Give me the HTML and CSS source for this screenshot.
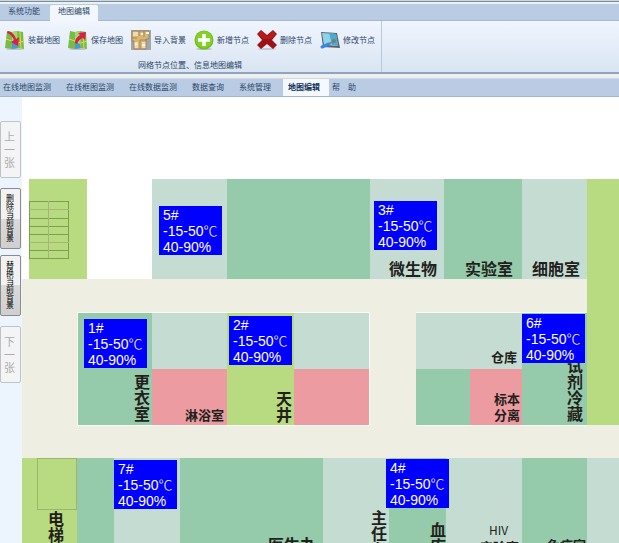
FILE: index.html
```html
<!DOCTYPE html>
<html lang="zh-CN">
<head>
    <meta charset="UTF-8">
    <meta name="viewport" content="width=device-width, initial-scale=1.0">
    <title>地图编辑</title>
    <link rel="stylesheet" href="styles.css">
</head>
<body>
    <header class="ribbon">
        <div class="ribbon-tabs">
            <button type="button" class="ribbon-tab">系统功能</button>
            <button type="button" class="ribbon-tab active">地图编辑</button>
        </div>
        <div class="ribbon-body">
            <div class="ribbon-group">
                <div class="tools">
                    <button type="button" class="tool">
                        <svg class="icon" viewBox="0 0 20 20">
                            <ellipse cx="10" cy="19" rx="9" ry="1" fill="#b9c4cc"/>
                            <path d="M2 1l5 1 5-1 6 1 1 17-6-1-6 1-7-1z" fill="#76bd45"/>
                            <path d="M7 2l5-1 1 17-6 1z" fill="#a4d867"/>
                            <path d="M7 11l5 2 1 5-6 1z" fill="#4e97d3"/>
                            <path d="M1 9l6 2M13 13l6-2M15 2l1 17" stroke="#f0cf4b" fill="none"/>
                            <path d="M3 1c4 1 7 4 8 8l3-2-1 9-7-4 3-2C8 7 5 4 2 3z" fill="#d91f4c"/>
                        </svg>
                        <span>装载地图</span>
                    </button>
                    <button type="button" class="tool">
                        <svg class="icon" viewBox="0 0 20 20">
                            <ellipse cx="10" cy="19" rx="9" ry="1" fill="#b9c4cc"/>
                            <path d="M2 1l5 1 5-1 6 1 1 17-6-1-6 1-7-1z" fill="#76bd45"/>
                            <path d="M7 2l5-1 1 17-6 1z" fill="#a4d867"/>
                            <path d="M7 12l5 2 1 4-6 1z" fill="#4e97d3"/>
                            <path d="M1 9l6 2M13 13l6-2M15 2l1 17" stroke="#f0cf4b" fill="none"/>
                            <path d="M7 13c0-4 2-6 5-8l-2-2 8-1-1 8-2-2c-3 1-5 3-6 6z" fill="#d91f4c"/>
                        </svg>
                        <span>保存地图</span>
                    </button>
                    <button type="button" class="tool">
                        <svg class="icon" viewBox="0 0 20 20">
                            <rect width="20" height="20" fill="#a5a6ac"/>
                            <path d="M1 1h17v8h-3v10H3v-8H1z" fill="#d9b673"/>
                            <path d="M2 2h5v4H2zM3 12h4v6H3zM11 12h4v6h-4z" fill="#efdcae"/>
                            <path d="M1 1h17v8h-3v10H3v-8H1zM8 1v5M1 8h5M9 10h6M9 10v9M13 1v6" stroke="#927554" stroke-width=".7" fill="none"/>
                            <path d="M15 3h3M10 4h2M4 14h2M11 15h3" stroke="#fff6dc" stroke-width="2"/>
                        </svg>
                        <span>导入背景</span>
                    </button>
                    <button type="button" class="tool">
                        <svg class="icon" viewBox="0 0 20 20">
                            <ellipse cx="10" cy="19" rx="8" ry="1" fill="#b8c2c6"/>
                            <circle cx="10" cy="10" r="9.500" fill="#6fbc1b"/>
                            <circle cx="10" cy="9.500" r="8.500" fill="#85cf27"/>
                            <path d="M10 4v12M4 10h12" stroke="#fff" stroke-width="3.500"/>
                        </svg>
                        <span>新增节点</span>
                    </button>
                    <button type="button" class="tool">
                        <svg class="icon" viewBox="0 0 20 20">
                            <ellipse cx="10" cy="19" rx="9" ry="1" fill="#c3cad1"/>
                            <path d="M4 0l6 5 6-5 4 4-5 6 5 5-4 4-6-5-6 5-4-4 5-5-5-6z" fill="#9c1315"/>
                            <path d="M4 1l6 5 6-5 3 3-5 5H6L1 4z" fill="#b51c1d"/>
                        </svg>
                        <span>删除节点</span>
                    </button>
                    <button type="button" class="tool">
                        <svg class="icon" viewBox="0 0 20 20">
                            <path d="M1 2l16 1 3 15-17-1z" fill="#5b6269"/>
                            <path d="M2 3l14 1 2 12-14-1z" fill="#8fd3ea"/>
                            <path d="M9 3l7 1 2 12-6-1z" fill="#50aacb"/>
                            <path d="M2 17l7-3" stroke="#3587ee" stroke-width="3" stroke-linecap="round"/>
                            <path d="M9 14l5-3" stroke="#7c858c" stroke-width="2"/>
                            <circle cx="14" cy="11" r="2" fill="#727b82"/>
                        </svg>
                        <span>修改节点</span>
                    </button>
                </div>
                <div class="group-title">网络节点位置、信息地图编辑</div>
            </div>
        </div>
    </header>

    <nav class="menu">
        <a href="#">在线地图监测</a>
        <a href="#">在线框图监测</a>
        <a href="#">在线数据监测</a>
        <a href="#">数据查询</a>
        <a href="#">系统管理</a>
        <a href="#" class="active">地图编辑</a>
        <a href="#">帮　助</a>
    </nav>

    <main class="workspace">
        <aside class="sidebar">
            <button type="button" class="page-btn" disabled>上一张</button>
            <div class="bg-actions">
                <button type="button" class="bg-btn">删除当前背景</button>
                <button type="button" class="bg-btn">替换当前背景</button>
            </div>
            <button type="button" class="page-btn" disabled>下一张</button>
        </aside>

        <section class="map">
            <svg class="floor">
                <!-- corridors -->
                <rect class="corridor" x="0" y="182" width="100%" height="180"/>

                <!-- top row -->
                <rect class="lime" x="7" y="82" width="58" height="100"/>
                <rect class="light" x="130" y="82" width="75" height="100"/>
                <rect class="green" x="205" y="82" width="143" height="100"/>
                <rect class="light" x="348" y="82" width="74" height="100"/>
                <rect class="green" x="422" y="82" width="78" height="100"/>
                <rect class="light" x="500" y="82" width="65" height="100"/>
                <rect class="lime" x="565" y="82" width="100%" height="246"/>

                <!-- stairs -->
                <path class="stairs" d="M7 104.500h40M7 121.500h40M7 129.500h40M7 137.500h40M7 153.500h40M7 161.500h40M7.500 104v57M46.500 104v57"/>
                <path class="stairs thin" d="M7 112.500h40M7 145.500h40M26.500 104v57"/>

                <!-- middle blocks -->
                <rect class="wall" x="55" y="215" width="293" height="114"/>
                <rect class="green" x="56" y="216" width="74" height="112"/>
                <rect class="light" x="130" y="216" width="75" height="56"/>
                <rect class="pink" x="130" y="272" width="75" height="56"/>
                <rect class="lime" x="205" y="216" width="67" height="112"/>
                <rect class="light" x="272" y="216" width="75" height="56"/>
                <rect class="pink" x="272" y="272" width="75" height="56"/>
                <rect class="wall" x="394" y="215" width="171" height="114"/>
                <rect class="light" x="394" y="216" width="106" height="56"/>
                <rect class="green" x="394" y="272" width="54" height="56"/>
                <rect class="pink" x="448" y="272" width="52" height="56"/>
                <rect class="green" x="500" y="216" width="65" height="112"/>

                <!-- bottom row -->
                <rect class="light" x="0" y="361" width="100%" height="100%"/>
                <rect class="lime" x="0" y="361" width="55" height="100%"/>
                <rect class="green" x="55" y="361" width="37" height="100%"/>
                <rect class="green" x="158" y="361" width="143" height="100%"/>
                <rect class="green" x="367" y="361" width="57" height="100%"/>
                <rect class="green" x="500" y="361" width="65" height="100%"/>
                <rect class="lift" x="15.500" y="361.500" width="39" height="51"/>

                <!-- room names -->
                <text class="room" x="367" y="178">微生物</text>
                <text class="room" x="443" y="178">实验室</text>
                <text class="room" x="510" y="178">细胞室</text>
                <text class="room vertical" x="120" y="277">更衣室</text>
                <text class="room small" x="163" y="323">淋浴室</text>
                <text class="room vertical" x="262" y="294">天井</text>
                <text class="room small" x="469" y="265">仓库</text>
                <text class="room small" x="472" y="307">标本</text>
                <text class="room small" x="472" y="323">分离</text>
                <text class="room vertical" x="553" y="261">试剂冷藏</text>
                <text class="room vertical" x="34" y="414">电梯</text>
                <text class="room" x="246" y="454">医生办</text>
                <text class="room vertical" x="357" y="413">主任办</text>
                <text class="room vertical" x="416" y="425">血库</text>
                <text class="room plain" x="467" y="438">HIV</text>
                <text class="room small" x="458" y="455">实验室</text>
                <text class="room small" x="525" y="453">免疫室</text>
            </svg>

            <div class="node node-1">1#<br>-15-50<span class="unit">℃</span><br>40-90%</div>
            <div class="node node-2">2#<br>-15-50<span class="unit">℃</span><br>40-90%</div>
            <div class="node node-3">3#<br>-15-50<span class="unit">℃</span><br>40-90%</div>
            <div class="node node-4">4#<br>-15-50<span class="unit">℃</span><br>40-90%</div>
            <div class="node node-5">5#<br>-15-50<span class="unit">℃</span><br>40-90%</div>
            <div class="node node-6">6#<br>-15-50<span class="unit">℃</span><br>40-90%</div>
            <div class="node node-7">7#<br>-15-50<span class="unit">℃</span><br>40-90%</div>
        </section>
    </main>
</body>
</html>
```
FILE: styles.css
```css
* {
    box-sizing: border-box;
}
body {
    margin: 0;
    height: 100vh;
    display: flex;
    flex-direction: column;
    overflow: hidden;
    font-family: "Liberation Sans", "Noto Sans CJK SC", sans-serif;
    font-size: 8px;
    line-height: 12px;
    color: #2c4668;
    background: #efefef;
}
button {
    font: inherit;
    color: inherit;
    padding: 0;
    border: none;
    background: none;
    cursor: pointer;
}

/* ribbon */
.ribbon {
    border-top: 1px solid #c3dae8;
    border-bottom: 2px solid #8fa4bf;
}
.ribbon-tabs {
    display: flex;
    align-items: flex-end;
    height: 20px;
    padding-top: 3px;
    border-top: 1px solid #7e8d99;
    border-bottom: 1px solid #a3b8d6;
    background: linear-gradient(#efefef 2px, #b9cce4 2px);
}
.ribbon-tab {
    height: 15px;
    padding: 0 8px 2px;
}
.ribbon-tab.active {
    height: 16px;
    margin: 0 0 -1px 2px;
    padding-bottom: 3px;
    border-radius: 2px 2px 0 0;
    background: #f2f7fe;
}
.ribbon-body {
    display: flex;
    background: linear-gradient(#f0f5fe, #d9e5f2);
}
.ribbon-group {
    padding: 9px 6px 0 5px;
    border-right: 1px solid #b9c8da;
}
.tools {
    display: flex;
    gap: 8px;
}
.tool {
    display: flex;
    align-items: center;
    gap: 3px;
}
.tool span {
    padding-top: 2px;
}
.icon {
    width: 20px;
    height: 20px;
}
.group-title {
    margin-top: 10px;
    height: 12px;
    text-align: center;
}

/* menu */
.menu {
    display: flex;
    margin-top: 4px;
    height: 19px;
    border-top: 1px solid #cbd8e8;
    border-bottom: 1px solid #9fb6d6;
    background: #b9cce4;
}
.menu a {
    padding: 3px 12px 0 3px;
    color: inherit;
    text-decoration: none;
}
.menu a.active {
    padding: 3px 9px 0 5px;
    font-weight: bold;
    color: #12305a;
    background: #f4f9ff;
}

/* workspace */
.workspace {
    flex: 1;
    display: flex;
    min-height: 0;
    background: #fff;
}
.sidebar {
    display: flex;
    flex-direction: column;
    gap: 10px;
    width: 22px;
    padding: 24px 1px 0 0;
    background: #ecf4fd;
}
.bg-actions {
    display: flex;
    flex-direction: column;
    gap: 6px;
}
.page-btn,
.bg-btn {
    border: 1px solid #8b8b8b;
    border-radius: 2px;
}
.page-btn {
    padding: 9px 5px 7px 3px;
    font-size: 11px;
    line-height: 13px;
    color: #adadad;
    border-color: #bcc3c9;
    background: #f4f4f4;
    cursor: default;
}
.bg-btn {
    padding: 6px 6px 5px 5px;
    line-height: 8px;
    color: #000;
    background: linear-gradient(#f2f2f2 50%, #dadada 50%, #cfcfcf);
}
.map {
    position: relative;
    flex: 1;
    overflow: hidden;
}

/* floor plan */
.floor {
    display: block;
    width: 100%;
    height: 100%;
}
.corridor { fill: #eeefe2; }
.lime { fill: #b8da80; }
.light { fill: #c4dcd2; }
.green { fill: #95caab; }
.pink { fill: #ec9ca0; }
.wall { fill: #fbfcf6; }
.stairs {
    fill: none;
    stroke: #7f9f50;
}
.stairs.thin {
    stroke: #a5b778;
}
.lift {
    fill: none;
    stroke: #9cb66b;
}
.room {
    font-family: "Noto Sans CJK SC", sans-serif;
    font-size: 16px;
    font-weight: bold;
    fill: #231f1c;
}
.room.small {
    font-size: 13px;
}
.room.plain {
    font-size: 12px;
    font-weight: normal;
}
.room.vertical {
    writing-mode: vertical-rl;
}

/* monitoring nodes */
.node {
    position: absolute;
    width: 63px;
    height: 49px;
    padding: 1px 0 0 4px;
    font-size: 14px;
    line-height: 16px;
    white-space: nowrap;
    color: #fff;
    background: #0000ff;
}
.unit {
    font-family: "Noto Sans CJK SC", sans-serif;
    font-weight: 300;
    line-height: 1;
}
.node-1 { left: 62px; top: 222px; }
.node-2 { left: 207px; top: 219px; }
.node-3 { left: 352px; top: 104px; }
.node-4 { left: 364px; top: 362px; }
.node-5 { left: 137px; top: 109px; }
.node-6 { left: 500px; top: 217px; }
.node-7 { left: 92px; top: 363px; }
```
